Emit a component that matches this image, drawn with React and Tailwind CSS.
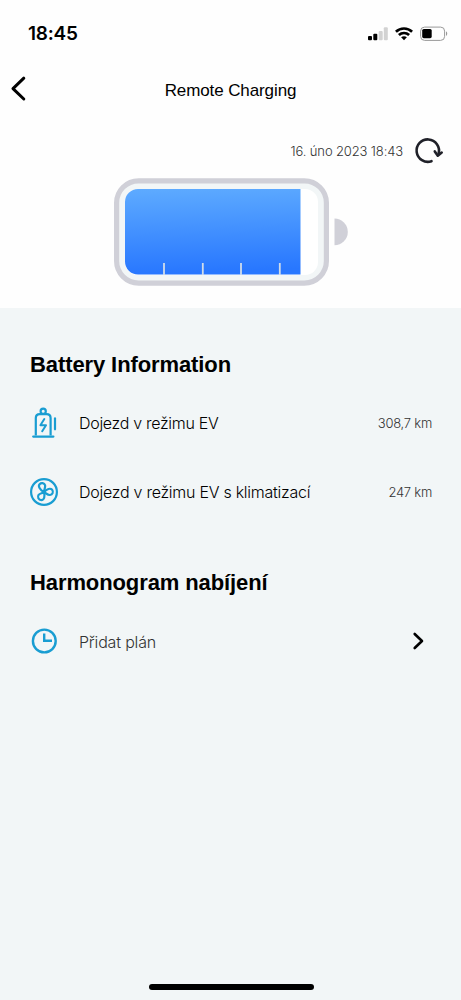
import React from "react";

function StatusBar() {
  return (
    <div className="flex h-[68px] items-center justify-between pl-[28px] pr-[13px]">
      <span className="text-[19px] leading-[24px] font-semibold tracking-[-0.25px]">18:45</span>
      <div className="flex items-center">
        <svg width="22" height="16" viewBox="0 0 22 16" className="mr-[6px]">
          <rect x="0" y="10" width="4" height="4.3" rx="1" fill="#000" />
          <rect x="5.3" y="7.8" width="4" height="6.5" rx="1" fill="#000" />
          <rect x="10.7" y="5" width="4" height="9.3" rx="1" fill="#d2d2d2" />
          <rect x="15.8" y="1.2" width="4" height="13.1" rx="1" fill="#d2d2d2" />
        </svg>
        <svg width="18" height="14" viewBox="0 0 18 14" className="-ml-[1px] mr-[7px]" fill="none" stroke="#000" strokeWidth="2.7">
          <path d="M0.9 4.8C5.5 0.4 12.5 0.4 17.1 4.8" />
          <path d="M3.9 8C6.8 5.3 11.2 5.3 14.1 8" />
          <path d="M6.1 10.3C7.8 8.8 10.2 8.8 11.9 10.3L9 13.3Z" fill="#000" stroke="none" />
        </svg>
        <svg width="28" height="16" viewBox="0 0 28 16">
          <rect x="0.6" y="1.1" width="24" height="13.3" rx="4" fill="none" stroke="#999" />
          <rect x="2.2" y="3" width="9.5" height="9.2" rx="1.6" fill="#000" />
          <path d="M26 5.3C27.7 6.2 27.7 9.2 26 10.1Z" fill="#999" />
        </svg>
      </div>
    </div>
  );
}

function Battery() {
  return (
    <svg width="236" height="110" viewBox="0 0 236 110" className="ml-[113px]">
      <defs>
        <linearGradient id="charge" x1="0" y1="0" x2="0.08" y2="1">
          <stop offset="0" stopColor="#5eabff" />
          <stop offset="1" stopColor="#2877ff" />
        </linearGradient>
      </defs>
      <rect x="3.6" y="2.8" width="209.8" height="102.3" rx="22" fill="#f2f6f7" stroke="#d0d0d8" strokeWidth="5.2" />
      <rect x="12" y="11" width="193" height="86" rx="13" fill="#fff" />
      <path d="M25 11H187.5V96.6H25A13 13 0 0 1 12 83.6V24A13 13 0 0 1 25 11Z" fill="url(#charge)" />
      <path d="M51 85V97M89.8 85V97M128 85V97M166.8 85V97" stroke="#d0dce9" strokeWidth="1.8" />
      <path d="M221.5 40.6A13.3 13.3 0 0 1 221.5 67.2Z" fill="#d0d0d8" />
    </svg>
  );
}

function ChargerIcon() {
  return (
    <svg width="28" height="34" viewBox="0 0 28 34" fill="none" stroke="#199dd2" strokeWidth="2.2">
      <circle cx="13.2" cy="5.3" r="2.6" />
      <path d="M5.8 29.4V12.1Q5.8 8.1 9.8 8.1H16.6Q20.6 8.1 20.6 12.1V29.4" />
      <path d="M3.2 30.6H23.4" strokeLinecap="round" />
      <path d="M25 12.4V23.3" strokeLinecap="round" />
      <path d="M14.3 13L10.4 19.2H16L12.2 25.2" strokeWidth="2" strokeLinejoin="round" strokeLinecap="round" />
    </svg>
  );
}

function FanIcon() {
  return (
    <svg width="28" height="28" viewBox="0 0 28 28" fill="none" stroke="#199dd2" strokeWidth="2.2">
      <circle cx="14" cy="14" r="12.9" />
      <path d="M14 14.2C9.8 11.6 7.8 8.2 9.6 6.2C11.2 4.4 14.4 4.9 15.1 7.2C15.6 9.2 14.2 11 14 14.2Z" />
      <path d="M14 14.2C16.8 10.8 20.4 9.8 22.2 11.8C23.8 13.9 22.5 16.8 20 17C17.6 17.2 16.4 15.4 14 14.2Z" />
      <path d="M14 14.2C15.2 18.4 14.2 22.1 11.3 22.1C8.5 22 7.2 19 8.6 16.9C9.9 15.1 11.8 15.5 14 14.2Z" />
      <circle cx="14" cy="14.2" r="1.9" fill="#199dd2" stroke="none" />
    </svg>
  );
}

function ClockIcon() {
  return (
    <svg width="28" height="28" viewBox="0 0 28 28" fill="none" stroke="#199dd2" strokeWidth="2.4">
      <circle cx="14.3" cy="14" r="11.4" />
      <path d="M14.2 6.5V13.8H22" />
    </svg>
  );
}

export default function App() {
  return (
    <main className="flex h-[1000px] w-[461px] flex-col overflow-hidden bg-[#fefefe] font-['Liberation_Sans',sans-serif] text-black">
      <div className="h-[68px] shrink-0 font-['Inter',sans-serif]">
        <StatusBar />
      </div>
      <header className="grid h-[44px] shrink-0 grid-cols-[48px_1fr_48px] items-center">
        <svg width="28" height="30" viewBox="0 0 28 30" className="-mt-[4px]" fill="none" stroke="#000" strokeWidth="3" strokeLinecap="round" strokeLinejoin="round">
          <path d="M23.8 5.2L13 15.6L23.8 26" />
        </svg>
        <h1 className="pt-[2px] text-center text-[17px] leading-[24px] tracking-[-0.1px]">Remote Charging</h1>
      </header>
      <div className="flex h-[66px] shrink-0 items-center justify-end pt-[11px] pr-[17px]">
        <span className="mr-[11px] font-['Inter',sans-serif] text-[13px] leading-[20px] font-light tracking-[-0.13px] text-[#333]">16. úno 2023 18:43</span>
        <svg width="30" height="28" viewBox="0 0 30 28" fill="none" stroke="#202129" strokeWidth="2.6" strokeLinecap="round" strokeLinejoin="round">
          <path d="M17.5 24.2A11.2 11.2 0 1 1 24.6 16.6" />
          <path d="M20.8 14.4L23.8 18.7L27.7 15.6" />
        </svg>
      </div>
      <div className="h-[130px] shrink-0">
        <Battery />
      </div>
      <section className="flex grow flex-col bg-[#f2f6f7] pt-[42px] pr-[29px] pl-[30px]">
        <h2 className="text-[22px] leading-[30px] font-bold tracking-[-0.1px]">Battery Information</h2>
        <div className="mt-[25px] flex h-[35px] items-center font-['Inter',sans-serif] font-light">
          <ChargerIcon />
          <span className="ml-[21px] grow text-[16px] leading-[24px] tracking-[-0.3px]">Dojezd v režimu EV</span>
          <span className="text-[13px] leading-[20px] tracking-[-0.25px] text-[#333]">308,7 km</span>
        </div>
        <div className="mt-[34px] flex h-[35px] items-center font-['Inter',sans-serif] font-light">
          <FanIcon />
          <span className="ml-[21px] grow text-[16px] leading-[24px] tracking-[-0.26px]">Dojezd v režimu EV s klimatizací</span>
          <span className="text-[13px] leading-[20px] tracking-[-0.25px] text-[#333]">247 km</span>
        </div>
        <h2 className="mt-[59px] text-[22px] leading-[30px] font-bold tracking-[-0.1px]">Harmonogram nabíjení</h2>
        <div className="mt-[25px] flex h-[35px] items-center pt-[1px]">
          <ClockIcon />
          <span className="ml-[21px] grow pt-[1px] font-['Inter',sans-serif] text-[16px] leading-[24px] font-light tracking-[-0.18px] text-[#333]">Přidat plán</span>
          <svg width="16" height="20" viewBox="0 0 16 20" className="mr-[5px]" fill="none" stroke="#000" strokeWidth="2.6" strokeLinecap="round" strokeLinejoin="round">
            <path d="M3.7 3L11 10L3.7 17" />
          </svg>
        </div>
        <div className="mt-auto mb-[10px] ml-[119px] h-[6px] w-[165px] rounded-full bg-black" />
      </section>
    </main>
  );
}
